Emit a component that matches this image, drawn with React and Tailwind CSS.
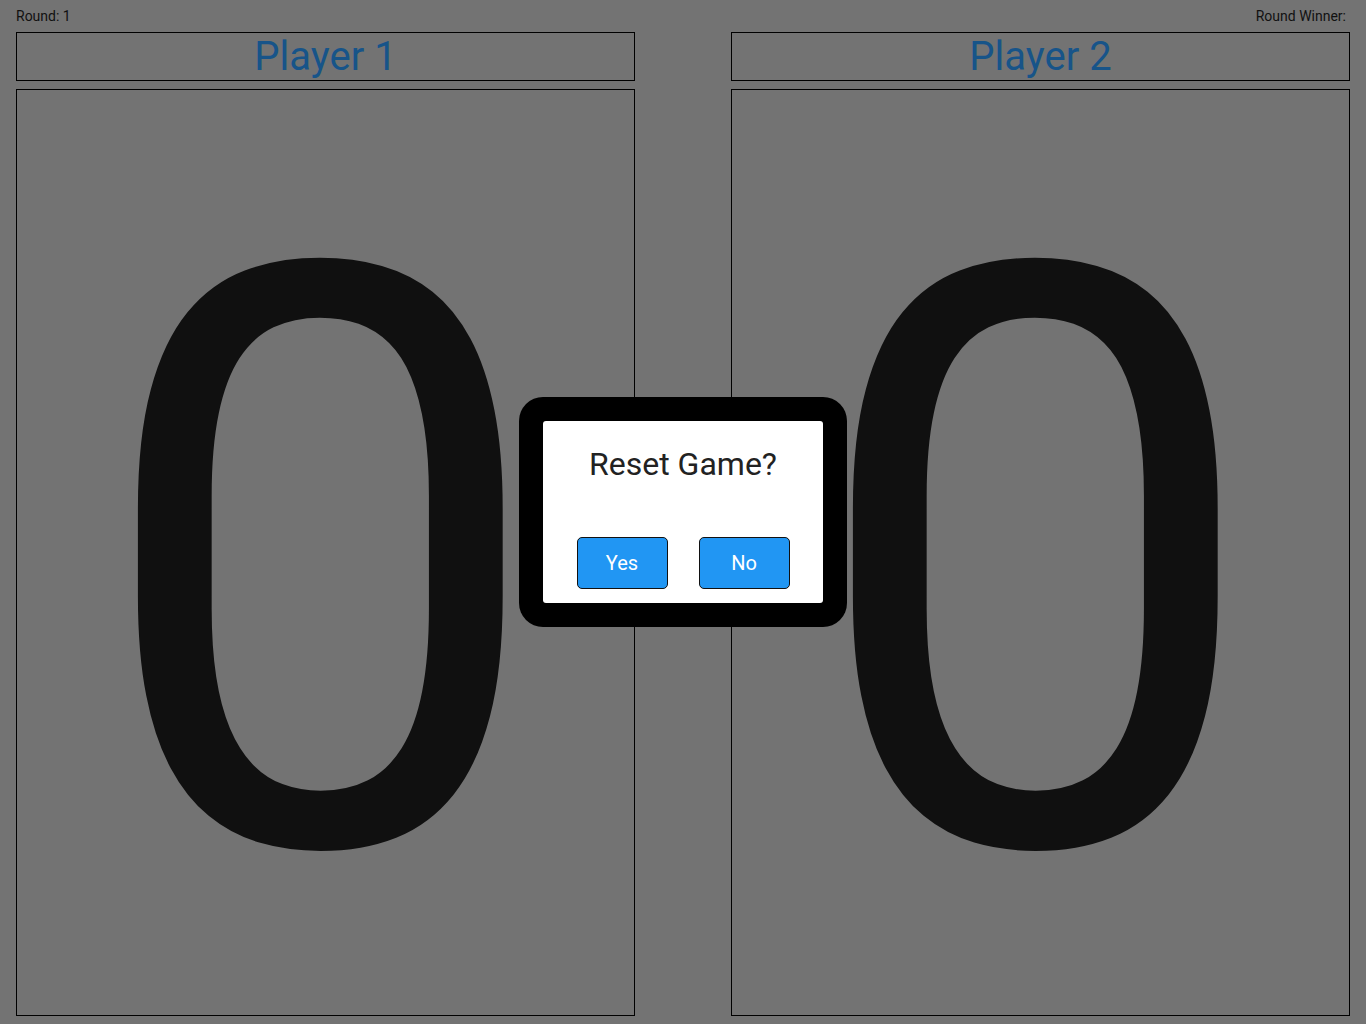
import React from 'react';

const players = [
  { name: 'Player 1', score: 0 },
  { name: 'Player 2', score: 0 },
];

export default function App() {
  return (
    <div className="relative w-full h-[1024px] bg-[#737373] overflow-hidden" style={{ fontFamily: 'Roboto, "Liberation Sans", sans-serif' }}>
      <div className="flex items-center justify-between h-8 pl-4 pr-5 text-[14px] text-[#111]">
        <span>Round: 1</span>
        <span>Round Winner:</span>
      </div>

      <div className="flex justify-between px-4">
        {players.map((p) => (
          <div key={p.name} className="w-[619px] flex flex-col gap-2">
            <div className="h-[49px] border border-black flex items-center justify-center">
              <span className="text-[40px] leading-none text-[#175489]">{p.name}</span>
            </div>
            <div className="h-[927px] border border-black flex items-center justify-center pt-[27px] pr-[10px]">
              <span className="text-[812px] leading-none text-[#101010]">{p.score}</span>
            </div>
          </div>
        ))}
      </div>

      {/* Reset dialog */}
      <div className="absolute inset-0 flex items-center justify-center">
        <div className="w-[328px] h-[230px] bg-black rounded-[24px] p-6">
          <div className="w-full h-full bg-white rounded-[3px] flex flex-col items-center">
            <h2 className="mt-[27px] text-[32px] leading-none text-[#222]">Reset Game?</h2>
            <div className="mt-auto mb-[14px] flex gap-[31px]">
              <button className="w-[91px] h-[52px] bg-[#2196f3] border-[1.5px] border-[#111] rounded-[5px] text-white text-[20px]">Yes</button>
              <button className="w-[91px] h-[52px] bg-[#2196f3] border-[1.5px] border-[#111] rounded-[5px] text-white text-[20px]">No</button>
            </div>
          </div>
        </div>
      </div>
    </div>
  );
}
